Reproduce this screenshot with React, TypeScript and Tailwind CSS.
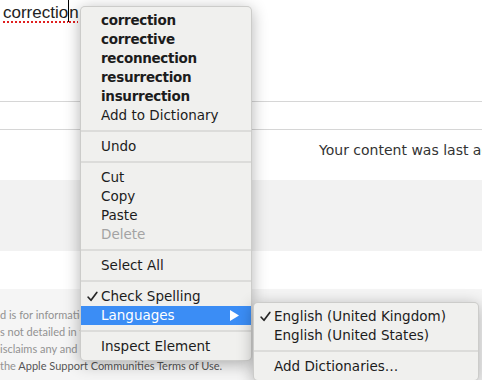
import { ReactNode } from 'react';

const menuFont = { fontFamily: '"DejaVu Sans", "Lucida Grande", sans-serif' };

type Entry =
  | { kind: 'item'; label: string; bold?: boolean; disabled?: boolean; checked?: boolean; active?: boolean; submenu?: boolean }
  | { kind: 'sep' };

const mainMenu: Entry[] = [
  { kind: 'item', label: 'correction', bold: true },
  { kind: 'item', label: 'corrective', bold: true },
  { kind: 'item', label: 'reconnection', bold: true },
  { kind: 'item', label: 'resurrection', bold: true },
  { kind: 'item', label: 'insurrection', bold: true },
  { kind: 'item', label: 'Add to Dictionary' },
  { kind: 'sep' },
  { kind: 'item', label: 'Undo' },
  { kind: 'sep' },
  { kind: 'item', label: 'Cut' },
  { kind: 'item', label: 'Copy' },
  { kind: 'item', label: 'Paste' },
  { kind: 'item', label: 'Delete', disabled: true },
  { kind: 'sep' },
  { kind: 'item', label: 'Select All' },
  { kind: 'sep' },
  { kind: 'item', label: 'Check Spelling', checked: true },
  { kind: 'item', label: 'Languages', active: true, submenu: true },
  { kind: 'sep' },
  { kind: 'item', label: 'Inspect Element' },
];

const languageMenu: Entry[] = [
  { kind: 'item', label: 'English (United Kingdom)', checked: true },
  { kind: 'item', label: 'English (United States)' },
  { kind: 'sep' },
  { kind: 'item', label: 'Add Dictionaries…' },
];

function Check({ white }: { white?: boolean }) {
  return (
    <svg width="11" height="11" viewBox="0 0 11 11" className="absolute left-[6px] top-[4px]">
      <path
        d="M1.2 6.2 L4 9.3 L9.8 1.4"
        fill="none"
        stroke={white ? '#fff' : '#262626'}
        strokeWidth="1.7"
        strokeLinecap="round"
        strokeLinejoin="round"
      />
    </svg>
  );
}

function Menu({ entries, className }: { entries: Entry[]; className: string }) {
  return (
    <div
      className={`absolute rounded-[5px] border border-black/15 bg-[#f0f0ee] py-[4px] text-[13.5px] text-[#1c1c1c] shadow-[0_3px_16px_rgba(0,0,0,0.3)] ${className}`}
      style={menuFont}
    >
      {entries.map((e, i) =>
        e.kind === 'sep' ? (
          <div key={i} className="flex h-[12px] items-center">
            <div className="h-[2px] w-full bg-[#dcdcda]" />
          </div>
        ) : (
          <div
            key={i}
            className={`relative flex h-[19px] items-center whitespace-nowrap pl-[20px] pr-[12px] leading-none ${
              e.active ? 'bg-[#3b8df5] text-white' : ''
            } ${e.bold ? 'font-bold tracking-[-0.3px]' : ''} ${e.disabled ? 'text-[#a3a3a3]' : ''}`}
          >
            {e.checked && <Check white={e.active} />}
            <span className="flex-1">{e.label}</span>
            {e.submenu && (
              <svg width="9" height="11" viewBox="0 0 9 11">
                <path d="M0 0 L9 5.5 L0 11 Z" fill="#fff" />
              </svg>
            )}
          </div>
        ),
      )}
    </div>
  );
}

function FooterLine({ children }: { children: ReactNode }) {
  return <div className="h-[17px] whitespace-nowrap leading-[17px]">{children}</div>;
}

export default function App() {
  return (
    <div className="relative h-[380px] w-[482px] overflow-hidden bg-white">
      <div className="h-[102px] border-b border-[#d6d6d6] px-[3px]">
        <div
          className="relative flex whitespace-nowrap pt-[2px] text-[17px] leading-[21px] text-[#222]"
          style={{ fontFamily: '"Liberation Sans", Arial, sans-serif' }}
        >
          <span className="underline decoration-[#e02020] decoration-dotted decoration-2 underline-offset-[3px]">
            correctio
          </span>
          <span className="-mt-[2px] h-[22px] w-px bg-black" />
          <span className="underline decoration-[#e02020] decoration-dotted decoration-2 underline-offset-[3px]">
            n
          </span>
          <span className="ml-[20px] text-[#555]">(public)</span>
        </div>
      </div>
      <div className="h-[28px] border-b border-[#d6d6d6]" />
      <div
        className="flex h-[50px] items-center whitespace-nowrap pb-[10px] pl-[319px] text-[14px] text-[#333]"
        style={menuFont}
      >
        Your content was last accessed
      </div>
      <div className="h-[71px] bg-[#f2f2f2]" />
      <div className="h-[38px]" />
      <div
        className="h-[91px] bg-[#f5f5f5] pt-[17px] text-[11px] text-[#929292]"
        style={{ fontFamily: 'Lato, "Open Sans", sans-serif' }}
      >
        <FooterLine>d is for informational purposes only.</FooterLine>
        <FooterLine>s not detailed in the document.</FooterLine>
        <FooterLine>isclaims any and all liability.</FooterLine>
        <FooterLine>
          the <span className="text-[#555]">Apple Support Communities Terms of Use.</span>
        </FooterLine>
      </div>

      <Menu entries={mainMenu} className="left-[80px] top-[6px] w-[172px]" />
      <Menu entries={languageMenu} className="left-[253px] top-[302px] w-[226px]" />
    </div>
  );
}
